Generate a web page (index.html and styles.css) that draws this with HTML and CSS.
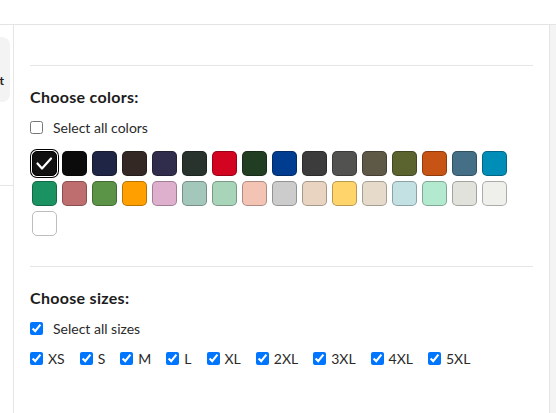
FILE: index.html
```html
<!DOCTYPE html>
<html>
<head>
<meta charset="utf-8">
<link rel="stylesheet" href="styles.css">
</head>
<body>
<div class="topbar"></div>
<div class="layout">
  <aside class="side">
    <div class="sidecard"><span class="sidetext">t</span></div>
    <div class="sideline"></div>
  </aside>
  <main class="main">
    <div class="lead"></div>
    <section class="section">
      <h2 class="title">Choose colors:</h2>
      <label class="check-row"><input type="checkbox" class="cb"><span>Select all colors</span></label>
      <div class="swatches">
        <span class="sw selected" style="background:#111111"><svg viewBox="0 0 25 25" width="25" height="25"><path d="M5.5 12.5 L10 17.5 L19 7.5" fill="none" stroke="#fff" stroke-width="2.2" stroke-linecap="round" stroke-linejoin="round"/></svg></span>
        <span class="sw" style="background:#0b0b0b"></span>
        <span class="sw" style="background:#1f2544"></span>
        <span class="sw" style="background:#332824"></span>
        <span class="sw" style="background:#302d4c"></span>
        <span class="sw" style="background:#28332d"></span>
        <span class="sw" style="background:#d2041f"></span>
        <span class="sw" style="background:#213e22"></span>
        <span class="sw" style="background:#003c8f"></span>
        <span class="sw" style="background:#3d3c3c"></span>
        <span class="sw" style="background:#525251"></span>
        <span class="sw" style="background:#5e5847"></span>
        <span class="sw" style="background:#5b632e"></span>
        <span class="sw" style="background:#c75314"></span>
        <span class="sw" style="background:#446f86"></span>
        <span class="sw" style="background:#008eb8"></span>
        <span class="sw" style="background:#1b9262"></span>
        <span class="sw" style="background:#be6e6e"></span>
        <span class="sw" style="background:#5c9447"></span>
        <span class="sw" style="background:#ffa000"></span>
        <span class="sw" style="background:#deb0ce"></span>
        <span class="sw" style="background:#a4c7bb"></span>
        <span class="sw" style="background:#a8d5b9"></span>
        <span class="sw" style="background:#f3c3b4"></span>
        <span class="sw" style="background:#cccccc"></span>
        <span class="sw" style="background:#e8d4c0"></span>
        <span class="sw" style="background:#ffd56b"></span>
        <span class="sw" style="background:#e6dbca"></span>
        <span class="sw" style="background:#c3e1e3"></span>
        <span class="sw" style="background:#b3e9cf"></span>
        <span class="sw" style="background:#e1e2dc"></span>
        <span class="sw" style="background:#eff0eb"></span>
        <span class="sw light" style="background:#ffffff"></span>
      </div>
    </section>
    <section class="section">
      <h2 class="title">Choose sizes:</h2>
      <label class="check-row"><input type="checkbox" class="cb" checked><span>Select all sizes</span></label>
      <div class="sizes">
        <label class="size"><input type="checkbox" class="cb" checked><span>XS</span></label>
        <label class="size"><input type="checkbox" class="cb" checked><span>S</span></label>
        <label class="size"><input type="checkbox" class="cb" checked><span>M</span></label>
        <label class="size"><input type="checkbox" class="cb" checked><span>L</span></label>
        <label class="size"><input type="checkbox" class="cb" checked><span>XL</span></label>
        <label class="size"><input type="checkbox" class="cb" checked><span>2XL</span></label>
        <label class="size"><input type="checkbox" class="cb" checked><span>3XL</span></label>
        <label class="size"><input type="checkbox" class="cb" checked><span>4XL</span></label>
        <label class="size"><input type="checkbox" class="cb" checked><span>5XL</span></label>
      </div>
    </section>
  </main>
  <div class="scroll"></div>
</div>
</body>
</html>
```

FILE: styles.css
```css
html, body {
  margin: 0;
  padding: 0;
  background: #ffffff;
  font-family: Lato, "Open Sans", Arial, sans-serif;
  color: #2a2a2a;
  overflow: hidden;
}
.topbar {
  height: 24px;
  border-bottom: 1px solid #e4e4e4;
}
.layout {
  display: flex;
  height: 388px;
}
.side {
  width: 13px;
  border-right: 1px solid #e6e6e6;
  flex: none;
}
.sidecard {
  margin-top: 12px;
  height: 65px;
  width: 10px;
  background: #f3f3f3;
  border-radius: 0 8px 8px 0;
  overflow: hidden;
  display: flex;
  justify-content: flex-end;
  box-sizing: border-box;
}
.sidetext {
  font-size: 12px;
  font-weight: 700;
  color: #222;
  margin-top: 37px;
  line-height: 14px;
  margin-right: 6px;
}
.sideline {
  margin-top: 83px;
  border-top: 1px solid #e6e6e6;
}
.main {
  flex: 1;
  padding: 0 16px;
}
.lead {
  height: 40px;
}
.section {
  border-top: 1px solid #e6e6e6;
  padding-top: 21px;
  padding-bottom: 27px;
}
.title {
  margin: 0;
  font-size: 16px;
  line-height: 20px;
  font-weight: 700;
  letter-spacing: 0.3px;
  color: #1c1c1c;
}
.check-row {
  display: flex;
  align-items: center;
  gap: 10px;
  margin-top: 10px;
  height: 20px;
  font-size: 14px;
}
.cb {
  margin: 0;
  width: 13px;
  height: 13px;
  flex: none;
}
.swatches {
  display: flex;
  flex-wrap: wrap;
  margin-top: 12px;
}
.sw {
  width: 25px;
  height: 25px;
  box-sizing: border-box;
  margin: 2px 3px 3px 2px;
  border-radius: 5px;
  border: 1px solid rgba(0, 0, 0, 0.28);
  display: block;
}
.sw.light {
  border-color: #bdbdbd;
}
.sw.selected {
  border-color: #000;
  box-shadow: 0 0 0 1px #fff, 0 0 0 2px #000;
  position: relative;
}
.sw.selected svg {
  position: absolute;
  left: -1px;
  top: -1px;
}
.sizes {
  display: flex;
  gap: 15px;
  margin-top: 10px;
  height: 20px;
  font-size: 14px;
}
.size {
  display: flex;
  align-items: center;
  gap: 5px;
}
.scroll {
  width: 6px;
  flex: none;
  border-left: 1px solid #e4e4e4;
  background: #f4f4f4;
}
```
